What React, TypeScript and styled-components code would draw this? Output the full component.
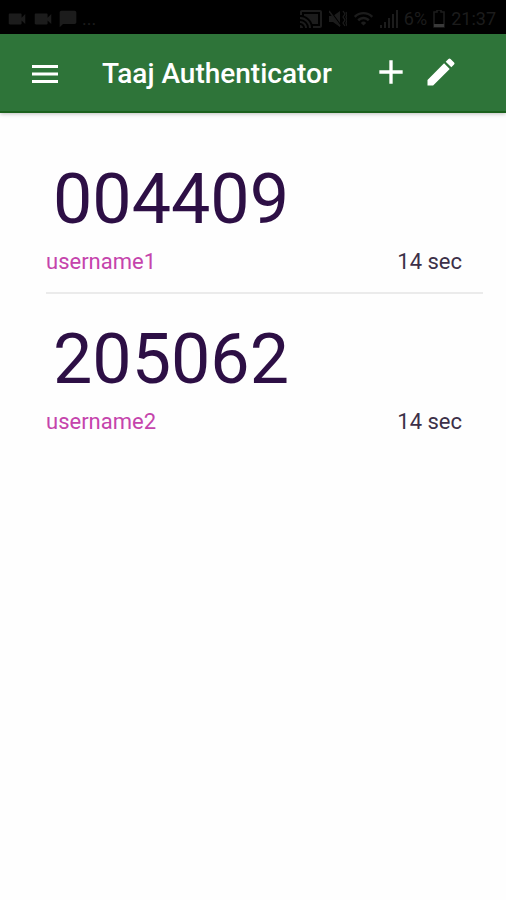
import React from "react";
import styled, { createGlobalStyle } from "styled-components";
import {
  MdAdd,
  MdCastConnected,
  MdChatBubble,
  MdEdit,
  MdVideocam,
  MdWifi,
} from "react-icons/md";

const GlobalStyle = createGlobalStyle`
  * { box-sizing: border-box; }
  body {
    margin: 0;
    background: #fefefe;
    font-family: Roboto, "Liberation Sans", sans-serif;
  }
`;

const Screen = styled.div`
  min-height: 100vh;
  background: #fefefe;
`;

const StatusBar = styled.div`
  display: flex;
  align-items: center;
  justify-content: space-between;
  height: 34px;
  padding: 3px 10px 0 6px;
  background: #000;
  color: #1c1c1c;
  font-size: 18px;
  line-height: 22px;
`;

const StatusGroup = styled.div<{ $gap: number }>`
  display: flex;
  align-items: center;
  gap: ${({ $gap }) => $gap}px;
`;

const AppBar = styled.header`
  display: flex;
  align-items: center;
  height: 79px;
  padding: 2px 44px 0 24px;
  background: #2e7439;
  border-bottom: 2px solid #1b611d;
  box-shadow: 0 1px 4px rgba(0, 0, 0, 0.25);
  color: #fff;
`;

const Title = styled.h1`
  flex: 1;
  margin: 0 0 0 36px;
  font-size: 28px;
  font-weight: 500;
  line-height: 32px;
  white-space: nowrap;
`;

const IconButton = styled.button`
  display: grid;
  place-items: center;
  width: 42px;
  height: 48px;
  padding: 0;
  border: 0;
  background: none;
  color: inherit;
  cursor: pointer;
`;

const Actions = styled.div`
  display: flex;
  gap: 8px;
  padding-bottom: 4px;
`;

const Accounts = styled.ul`
  margin: 0;
  padding: 21px 23px 0 46px;
  list-style: none;
`;

const Account = styled.li`
  height: 160px;
  padding-top: 24px;

  &:not(:last-child) {
    border-bottom: 2px solid #ebebeb;
  }
`;

const Code = styled.div`
  padding-left: 7px;
  color: #2d0f45;
  font-size: 70px;
  line-height: 82px;
`;

const Details = styled.div`
  display: flex;
  justify-content: space-between;
  margin-top: 9px;
  padding-right: 21px;
  font-size: 22px;
  line-height: 26px;
`;

const Username = styled.span`
  color: #c544ac;
`;

const Remaining = styled.span`
  color: #3c3048;
`;

const accounts = [
  { code: "004409", name: "username1", seconds: 14 },
  { code: "205062", name: "username2", seconds: 14 },
];

function MenuIcon() {
  return (
    <svg width="26" height="18" viewBox="0 0 26 18" fill="currentColor" aria-hidden="true">
      <path d="M0 0h26v3H0zM0 7.5h26v3H0zM0 15h26v3H0z" />
    </svg>
  );
}

function VibrateIcon() {
  return (
    <svg width="18" height="18" viewBox="0 0 18 18" fill="currentColor" aria-hidden="true">
      <path d="M0 6h4l7-5v16l-7-5H0z" />
      <path d="M1 1l11 15" stroke="#000" strokeWidth="2" />
      <path d="M0 1l11 15" stroke="currentColor" strokeWidth="1.5" />
      <path
        d="M14 1l2 3-2 3 2 3-2 3 2 3M17 2l1 2-1 3 1 3-1 3 1 3"
        fill="none"
        stroke="currentColor"
        strokeWidth="1.2"
      />
    </svg>
  );
}

function SignalIcon() {
  return (
    <svg width="18" height="18" viewBox="0 0 18 18" fill="currentColor" aria-hidden="true">
      <path d="M0 15h2v3H0zM4 12h2v6H4zM8 8h2v10H8zM12 4h2v14h-2zM16 0h2v18h-2z" />
    </svg>
  );
}

function BatteryIcon() {
  return (
    <svg width="12" height="18" viewBox="0 0 12 18" aria-hidden="true">
      <path d="M4 0h4v2h3v15H1V2h3z" fill="none" stroke="currentColor" strokeWidth="1.6" />
      <path d="M1 14h10v3H1z" fill="#3a3a3a" />
    </svg>
  );
}

export default function App() {
  return (
    <Screen>
      <GlobalStyle />
      <StatusBar>
        <StatusGroup $gap={4}>
          <MdVideocam size={22} />
          <MdVideocam size={22} />
          <MdChatBubble size={20} />
          <span>...</span>
        </StatusGroup>
        <StatusGroup $gap={6}>
          <MdCastConnected size={24} />
          <VibrateIcon />
          <MdWifi size={21} />
          <SignalIcon />
          <span>6%</span>
          <BatteryIcon />
          <span>21:37</span>
        </StatusGroup>
      </StatusBar>
      <AppBar>
        <IconButton type="button" aria-label="Open menu">
          <MenuIcon />
        </IconButton>
        <Title>Taaj Authenticator</Title>
        <Actions>
          <IconButton type="button" aria-label="Add account">
            <MdAdd size={40} />
          </IconButton>
          <IconButton type="button" aria-label="Edit accounts">
            <MdEdit size={36} />
          </IconButton>
        </Actions>
      </AppBar>
      <main>
        <Accounts>
          {accounts.map((account) => (
            <Account key={account.name}>
              <Code>{account.code}</Code>
              <Details>
                <Username>{account.name}</Username>
                <Remaining>{account.seconds} sec</Remaining>
              </Details>
            </Account>
          ))}
        </Accounts>
      </main>
    </Screen>
  );
}
